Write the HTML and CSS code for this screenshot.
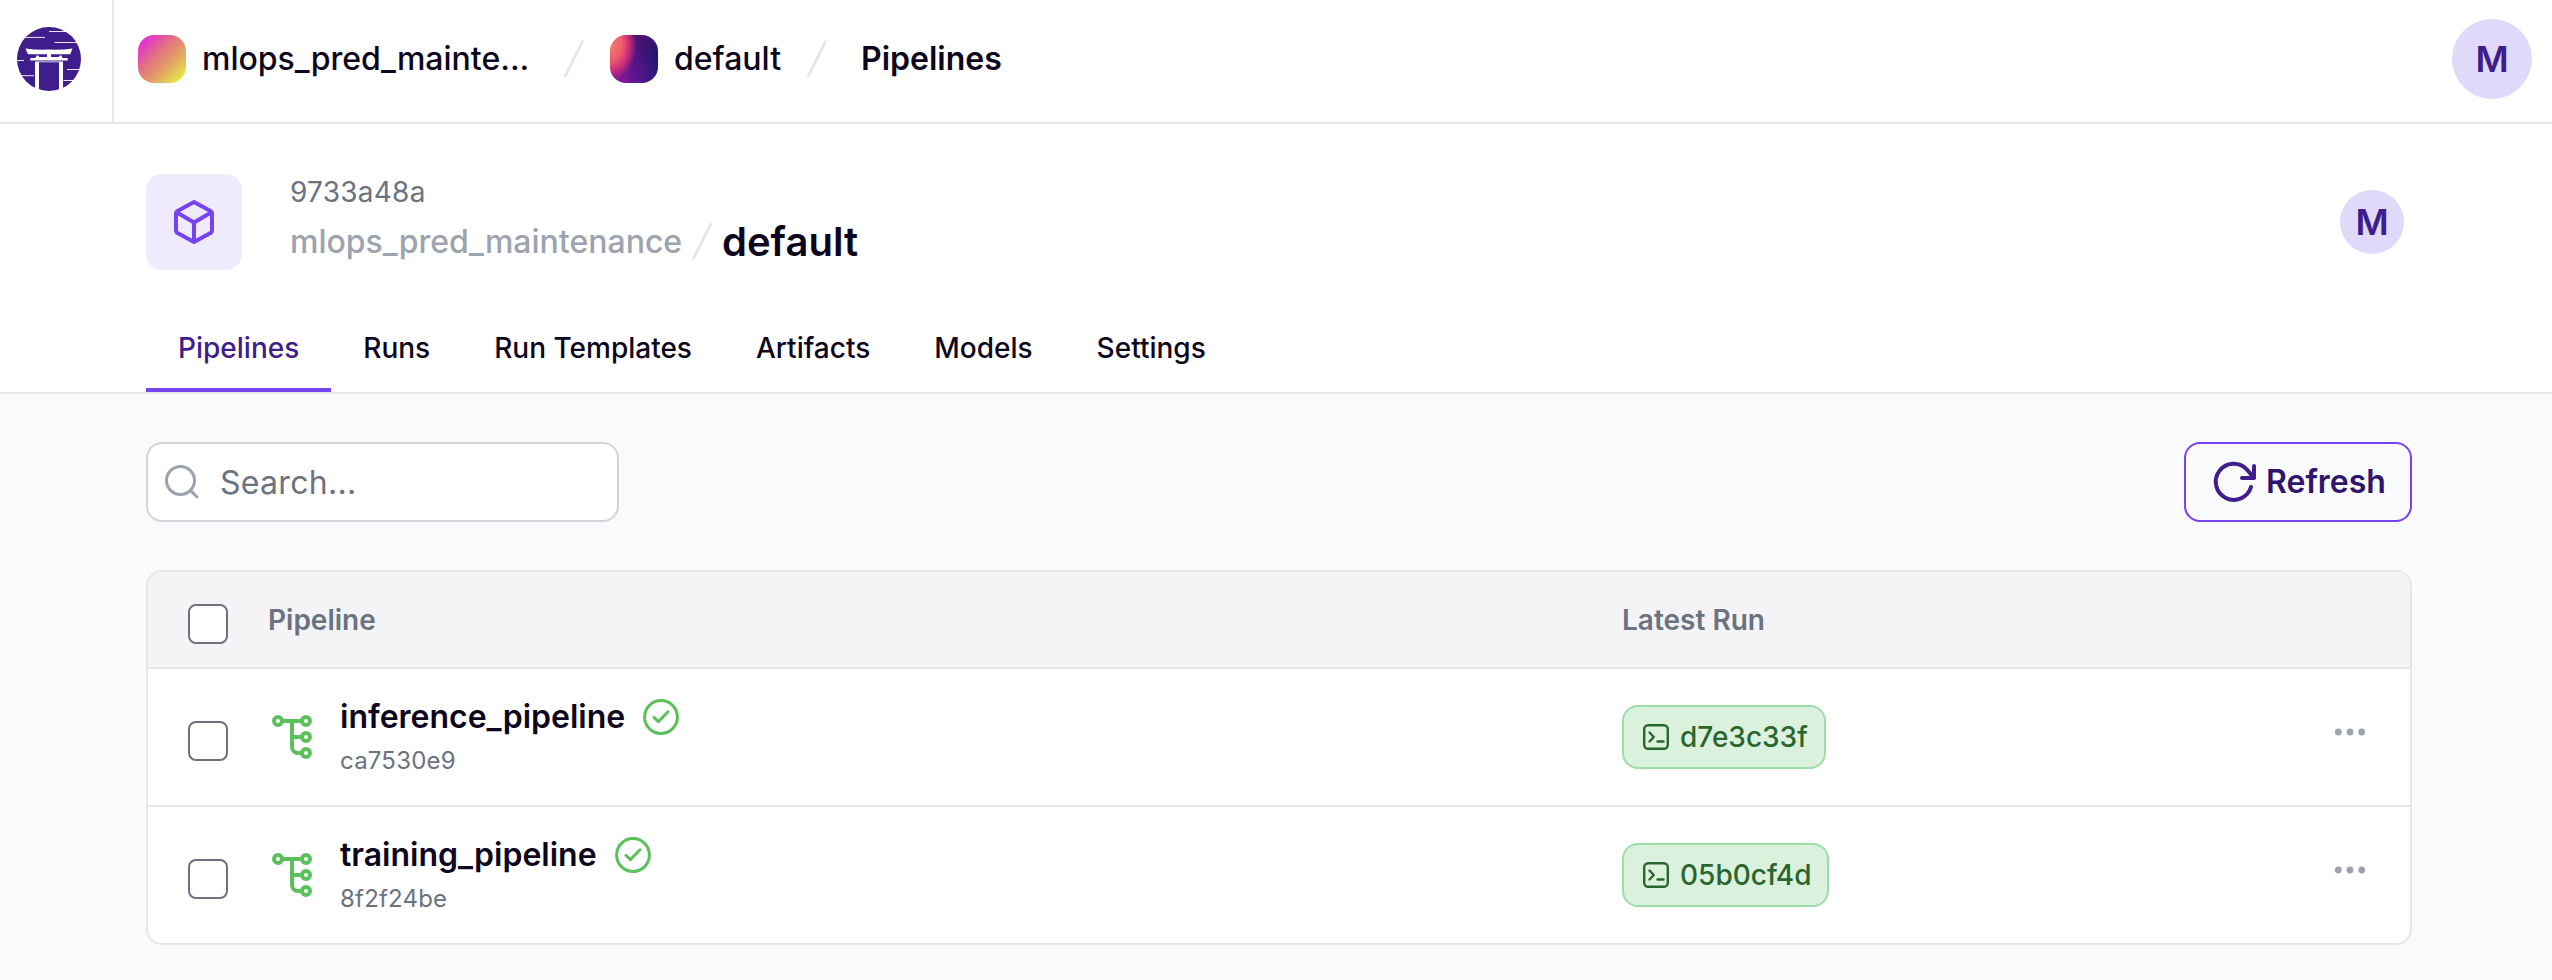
FILE: index.html
```html
<!DOCTYPE html>
<html lang="en">
<head>
<meta charset="utf-8">
<title>Pipelines</title>
<link rel="stylesheet" href="styles.css">
</head>
<body>
<svg class="sprite" aria-hidden="true">
  <symbol id="pipeline" viewBox="0 0 48 48">
    <g fill="none" stroke="currentColor" stroke-width="4">
      <circle cx="10" cy="8" r="4"/><circle cx="38" cy="8" r="4"/><circle cx="38" cy="24" r="4"/><circle cx="38" cy="40" r="4"/>
      <path d="M14 8H34M24 8V34a6 6 0 0 0 6 6H34M24 24H34"/>
    </g>
  </symbol>
  <symbol id="check" viewBox="0 0 40 40">
    <g fill="none" stroke="currentColor" stroke-width="3" stroke-linecap="round" stroke-linejoin="round">
      <circle cx="20" cy="20" r="16.4"/><path d="M13 20.4L17.4 24.6L27 14.8"/>
    </g>
  </symbol>
  <symbol id="terminal" viewBox="0 0 32 32">
    <g fill="none" stroke="currentColor" stroke-width="2.4" stroke-linecap="round" stroke-linejoin="round">
      <rect x="4.2" y="4.2" width="23.6" height="23.6" rx="4"/><path d="M9.500 11.500L13.800 16L9.500 20.500M17.500 20.500H23.500"/>
    </g>
  </symbol>
  <symbol id="dots" viewBox="0 0 40 40">
    <g fill="currentColor"><circle cx="8.3" cy="20" r="3.4"/><circle cx="20" cy="20" r="3.4"/><circle cx="31.7" cy="20" r="3.4"/></g>
  </symbol>
  <symbol id="slash" viewBox="0 0 40 40">
    <path d="M11.5 36.5L28.5 2.5" fill="none" stroke="currentColor" stroke-width="3" stroke-linecap="round"/>
  </symbol>
</svg>

<header class="topbar">
  <a class="brand">
    <svg width="64" height="64" viewBox="0 0 64 64">
      <circle cx="32" cy="32" r="32" fill="#3f1d8c"/>
      <g fill="#fff">
        <path d="M8.5 21.5Q20 23.200 32 22.600Q44 23.200 55.500 21.500L53.200 27.300H11Z"/>
        <path d="M13.300 31H18.300L20.200 28L22.500 30H30V27H34V30H41.500L43.800 28L45.700 31H50.700V33.600H13.300Z"/>
        <path d="M18 34.600H46V35.200H18ZM18 34.600H22V63H18ZM42 34.600H46V63H42Z"/>
      </g>
      <path d="M32 4.500H49M37.600 15.500H61M4 10.400H28M0 33.500H7M50 42.500H64M3 48.700H17M46.500 53.500H56" stroke="#fff" stroke-width=".9"/>
    </svg>
  </a>
  <nav class="crumbs">
    <span class="swatch swatch-warm"></span>
    <span class="crumb crumb-workspace">mlops_pred_mainte...</span>
    <svg class="slash"><use href="#slash"/></svg>
    <span class="swatch swatch-night"></span>
    <span class="crumb crumb-project">default</span>
    <svg class="slash"><use href="#slash"/></svg>
    <span class="crumb crumb-current">Pipelines</span>
  </nav>
  <span class="avatar avatar-lg">M</span>
</header>

<section class="page-head">
  <div class="project">
    <span class="tile">
      <svg width="48" height="48" viewBox="0 0 48 48" fill="none" stroke="currentColor" stroke-width="4" stroke-linejoin="round" stroke-linecap="round">
        <path d="M24 4L40.500 13Q42 14 42 15.500V32.500Q42 34 40.500 35L24 44L7.500 35Q6 34 6 32.500V15.500Q6 14 7.500 13ZM7 14.500L24 24.500L41 14.500M24 24.500V43"/>
      </svg>
    </span>
    <div class="project-text">
      <div class="project-id">9733a48a</div>
      <div class="project-title">
        <span class="workspace">mlops_pred_maintenance</span>
        <svg class="slash"><use href="#slash"/></svg>
        <h1>default</h1>
      </div>
    </div>
    <span class="avatar">M</span>
  </div>
  <nav class="tabs">
    <a class="tab active">Pipelines</a>
    <a class="tab">Runs</a>
    <a class="tab">Run Templates</a>
    <a class="tab">Artifacts</a>
    <a class="tab">Models</a>
    <a class="tab">Settings</a>
  </nav>
</section>

<main class="content">
  <div class="toolbar">
    <div class="search">
      <svg width="40" height="40" viewBox="0 0 40 40" fill="none" stroke="currentColor" stroke-width="3" stroke-linecap="round"><circle cx="18.500" cy="18.500" r="14"/><path d="M28.500 28.500L34.800 34.800"/></svg>
      <span>Search...</span>
    </div>
    <button class="refresh">
      <svg width="48" height="48" viewBox="0 0 48 48" fill="none" stroke="currentColor" stroke-width="4" stroke-linecap="round" stroke-linejoin="round"><path d="M41 29A18 18 0 1 1 36.700 11.300L44 20M44 8V20H32"/></svg>
      <span>Refresh</span>
    </button>
  </div>

  <div class="table">
    <div class="row head">
      <span class="checkbox"></span>
      <span class="col-name">Pipeline</span>
      <span class="col-run">Latest Run</span>
    </div>
    <div class="row">
      <span class="checkbox"></span>
      <div class="col-name">
        <svg class="pipeline-icon"><use href="#pipeline"/></svg>
        <div>
          <div class="name"><span>inference_pipeline</span><svg class="check"><use href="#check"/></svg></div>
          <div class="hash">ca7530e9</div>
        </div>
      </div>
      <div class="col-run"><span class="badge"><svg class="terminal"><use href="#terminal"/></svg>d7e3c33f</span></div>
      <svg class="dots"><use href="#dots"/></svg>
    </div>
    <div class="row">
      <span class="checkbox"></span>
      <div class="col-name">
        <svg class="pipeline-icon"><use href="#pipeline"/></svg>
        <div>
          <div class="name"><span>training_pipeline</span><svg class="check"><use href="#check"/></svg></div>
          <div class="hash">8f2f24be</div>
        </div>
      </div>
      <div class="col-run"><span class="badge"><svg class="terminal"><use href="#terminal"/></svg>05b0cf4d</span></div>
      <svg class="dots"><use href="#dots"/></svg>
    </div>
  </div>
</main>
</body>
</html>
```

FILE: styles.css
```css
*, *::before, *::after { box-sizing: border-box; }
body {
  margin: 0;
  min-height: 980px;
  background: #f9fafc;
  color: #0d061d;
  font-family: Inter, "Liberation Sans", sans-serif;
  font-size: 32px;
  -webkit-font-smoothing: antialiased;
}
svg { flex: none; display: block; }
.sprite { display: none; }

.topbar {
  display: flex;
  height: 124px;
  background: #fff;
  border-bottom: 2px solid #e5e7eb;
}
.brand {
  width: 114px;
  padding: 27px 0 0 17px;
  border-right: 2px solid #e5e7eb;
}
.crumbs {
  display: flex;
  flex: 1;
  align-items: center;
  height: 118px;
  padding-left: 24px;
}
.swatch { width: 48px; height: 48px; border-radius: 16px; margin-right: 16px; }
.swatch-warm { background: linear-gradient(135deg, #e233d0 12%, #e2737f 40%, #e3a165 63%, #e4ea45 92%); }
.swatch-night {
  background:
    radial-gradient(ellipse 27px 36px at 0 10px, #f0806a 0%, #ee5a70 45%, rgba(225, 50, 120, .85) 70%, rgba(150, 25, 130, 0) 100%),
    radial-gradient(circle at 15% 100%, #8a1a9c 0%, rgba(110, 20, 150, .7) 35%, rgba(60, 20, 120, 0) 75%),
    linear-gradient(135deg, #4b1276 35%, #2b166e 60%, #10207c 100%);
}
.crumb { white-space: nowrap; line-height: 48px; font-weight: 500; }
.crumb-workspace { width: 336px; }
.crumb-project { width: 107px; }
.crumb-current { font-weight: 600; margin-left: 8px; }
.slash { width: 40px; height: 40px; color: #e5e7eb; }
.crumbs .slash { margin: 0 16px; }
.avatar {
  display: flex;
  flex: none;
  align-items: center;
  justify-content: center;
  width: 64px;
  height: 64px;
  border-radius: 50%;
  background: #e0d9fa;
  color: #3f1d8c;
  font-size: 36px;
  font-weight: 600;
}
.avatar-lg { width: 80px; height: 80px; margin: 19px 20px 0 0; }

.page-head {
  height: 270px;
  padding: 50px 140px 0 146px;
  background: #fff;
  border-bottom: 2px solid #e5e7eb;
}
.project { display: flex; align-items: center; height: 96px; padding-right: 8px; }
.tile {
  display: flex;
  align-items: center;
  justify-content: center;
  width: 96px;
  height: 96px;
  border-radius: 16px;
  background: #f0ebfc;
  color: #7543f0;
}
.project-text { flex: 1; margin-left: 48px; }
.project-id { height: 40px; line-height: 40px; font-size: 28px; letter-spacing: .25px; color: #6b7280; }
.project-title { display: flex; align-items: center; height: 60px; }
.workspace { width: 392px; line-height: 40px; margin-top: -1px; font-weight: 500; color: #9ca3af; }
h1 { margin: 0; font-size: 40px; font-weight: 600; line-height: 60px; }

.tabs { display: flex; margin-top: 38px; }
.tab {
  height: 84px;
  padding: 0 32px;
  line-height: 80px;
  font-size: 28px;
  font-weight: 500;
  border-bottom: 4px solid transparent;
}
.tab.active { color: #3f1d8c; border-color: #7543f0; }

.content { padding: 48px 140px 0 146px; }
.toolbar { display: flex; justify-content: space-between; }
.search {
  display: flex;
  align-items: center;
  gap: 18px;
  width: 473px;
  height: 80px;
  padding-left: 14px;
  background: #fff;
  border: 2px solid #d1d5db;
  border-radius: 16px;
  color: #9ca3af;
}
.search span { color: #6b7280; letter-spacing: .3px; }
.refresh {
  display: flex;
  align-items: center;
  gap: 8px;
  width: 228px;
  height: 80px;
  padding: 0 0 0 24px;
  background: none;
  border: 2px solid #7543f0;
  border-radius: 16px;
  color: #3f1d8c;
  font: inherit;
  font-weight: 600;
}
.refresh span { color: #2f156c; line-height: 40px; margin-top: -1px; }

.table {
  margin-top: 48px;
  background: #fff;
  border: 2px solid #e5e7eb;
  border-radius: 16px;
  overflow: hidden;
}
.row {
  display: flex;
  align-items: center;
  height: 138px;
  padding-left: 40px;
  border-bottom: 2px solid #e5e7eb;
}
.row:last-child { height: 136px; border-bottom: 0; }
.head {
  height: 97px;
  background: #f4f4f6;
  color: #6b7280;
  font-size: 28px;
  font-weight: 600;
}
.checkbox {
  flex: none;
  width: 40px;
  height: 40px;
  margin-top: 8px;
  background: #fff;
  border: 2px solid #6b7280;
  border-radius: 8px;
}
.col-name { display: flex; align-items: center; width: 1394px; padding-left: 40px; }
.col-run { width: 708px; }
.pipeline-icon { width: 48px; height: 48px; margin-right: 24px; color: #5bbf5a; }
.name { display: flex; align-items: center; gap: 16px; height: 46px; line-height: 40px; font-weight: 600; }
.hash { height: 40px; line-height: 42px; font-size: 24px; letter-spacing: .2px; color: #6b7280; }
.check { width: 40px; height: 40px; color: #5bbf5a; }
.badge {
  display: inline-flex;
  align-items: center;
  gap: 8px;
  height: 64px;
  padding: 0 16px;
  background: #daf1de;
  border: 2px solid #9fdda8;
  border-radius: 16px;
  color: #2a652d;
  font-size: 28px;
  font-weight: 500;
  vertical-align: top;
}
.terminal { width: 32px; height: 32px; }
.dots { width: 40px; height: 40px; margin-bottom: 10px; color: #9ca3af; }
```
